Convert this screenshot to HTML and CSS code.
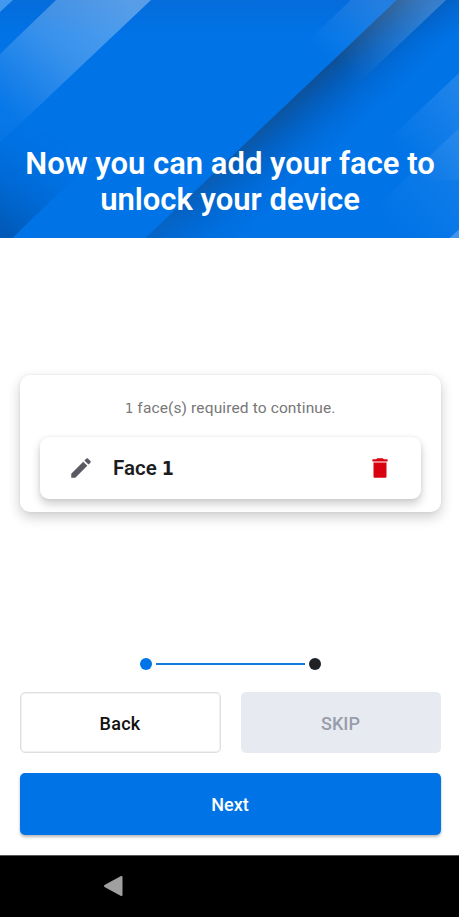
FILE: index.html
```html
<!DOCTYPE html>
<html lang="en">
<head>
<meta charset="utf-8">
<meta name="viewport" content="width=device-width">
<title>Face unlock setup</title>
<link rel="stylesheet" href="styles.css">
</head>
<body>
<div class="screen">
  <header class="hero">
    <svg class="hero-art" viewBox="0 0 459 238" preserveAspectRatio="none" aria-hidden="true">
      <defs>
        <linearGradient id="top" x1="0" y1="0" x2="0" y2="1"><stop offset="0" stop-color="#056cdb"/><stop offset=".15" stop-color="#0073e7"/><stop offset="1" stop-color="#0073e7"/></linearGradient>
        <linearGradient id="band" gradientUnits="userSpaceOnUse" x1="125" y1="0" x2="15" y2="119"><stop offset="0" stop-color="#fff" stop-opacity=".33"/><stop offset=".5" stop-color="#fff" stop-opacity=".22"/><stop offset="1" stop-color="#fff" stop-opacity=".03"/></linearGradient>
        <linearGradient id="corner" gradientUnits="userSpaceOnUse" x1="0" y1="238" x2="20" y2="125"><stop offset="0" stop-color="#003c80" stop-opacity=".48"/><stop offset="1" stop-color="#003c80" stop-opacity="0"/></linearGradient>
        <linearGradient id="cornerfade" gradientUnits="userSpaceOnUse" x1="0" y1="220" x2="85" y2="170"><stop offset="0" stop-color="#fff"/><stop offset="1" stop-color="#000"/></linearGradient>
        <mask id="cm" maskUnits="userSpaceOnUse" x="0" y="0" width="459" height="238"><rect width="459" height="238" fill="url(#cornerfade)"/></mask>
        <linearGradient id="shade" gradientUnits="userSpaceOnUse" x1="300" y1="91.6" x2="345" y2="139"><stop offset="0" stop-color="#173b66" stop-opacity=".7"/><stop offset=".3" stop-color="#093f7e" stop-opacity=".46"/><stop offset=".65" stop-color="#04448c" stop-opacity=".18"/><stop offset="1" stop-color="#04448c" stop-opacity="0"/></linearGradient>
        <linearGradient id="along" gradientUnits="userSpaceOnUse" x1="397" y1="0" x2="145" y2="238"><stop offset="0" stop-color="#fff"/><stop offset=".35" stop-color="#ddd"/><stop offset=".65" stop-color="#aaa"/><stop offset="1" stop-color="#555"/></linearGradient>
        <mask id="sm" maskUnits="userSpaceOnUse" x="0" y="0" width="459" height="238"><rect width="459" height="238" fill="url(#along)"/></mask>
        <linearGradient id="glow" gradientUnits="userSpaceOnUse" x1="375" y1="0" x2="318" y2="54"><stop offset="0" stop-color="#fff" stop-opacity=".12"/><stop offset="1" stop-color="#fff" stop-opacity="0"/></linearGradient>
        <linearGradient id="glow2" gradientUnits="userSpaceOnUse" x1="425" y1="0" x2="348" y2="73"><stop offset="0" stop-color="#fff" stop-opacity=".2"/><stop offset="1" stop-color="#fff" stop-opacity="0"/></linearGradient>
        <linearGradient id="glow3" gradientUnits="userSpaceOnUse" x1="459" y1="90" x2="395" y2="150"><stop offset="0" stop-color="#fff" stop-opacity=".12"/><stop offset="1" stop-color="#fff" stop-opacity="0"/></linearGradient>
        <linearGradient id="glow4" gradientUnits="userSpaceOnUse" x1="459" y1="145" x2="380" y2="219"><stop offset="0" stop-color="#fff" stop-opacity=".08"/><stop offset="1" stop-color="#fff" stop-opacity="0"/></linearGradient>
      </defs>
      <rect width="459" height="238" fill="url(#top)"/>
      <path d="M0 0H13L0 12Z" fill="#4298ed"/>
      <path d="M56 0H151L26 118 0 142V54Z" fill="url(#band)"/>
      <g mask="url(#cm)"><path d="M0 110H144L12 238H0Z" fill="url(#corner)"/></g>
      <path d="M351 0H397L320 73H311V38Z" fill="url(#glow)"/>
      <g mask="url(#sm)"><path d="M397 0H459V238H145Z" fill="url(#shade)"/></g>
      <path d="M397 0H446L355 86H306Z" fill="url(#glow2)"/>
      <path d="M459 73V180H390V138Z" fill="url(#glow3)"/>
      <path d="M459 128V238H342Z" fill="url(#glow4)"/>
      <path d="M459 229V238H449Z" fill="#4095ed"/>
    </svg>
    <h1 class="hero-title"><span class="line">Now you can add your face to</span><span class="line">unlock your device</span></h1>
  </header>
  <main class="content">
    <section class="card">
      <p class="hint"><span class="num">1</span> face(s) required to continue.</p>
      <div class="face">
        <svg class="pencil" viewBox="0 0 24 24" aria-hidden="true"><path fill="currentColor" d="M3 17.25V21h3.75L17.81 9.94l-3.75-3.75L3 17.25zM20.71 7.04a1 1 0 0 0 0-1.41l-2.34-2.34a1 1 0 0 0-1.41 0l-1.83 1.83 3.75 3.75 1.83-1.83z"/></svg>
        <span class="name">Face <span class="num">1</span></span>
        <svg class="trash" viewBox="0 0 24 24" aria-hidden="true"><path fill="currentColor" d="M6 19.500c0 .9.600 1.500 1.500 1.500h9c.9 0 1.500-.6 1.500-1.500V7H6v12.500zM19 4h-3.500l-1-1h-5l-1 1H5v2h14V4z"/></svg>
      </div>
    </section>
  </main>
  <footer class="footer">
    <div class="steps"><i class="dot"></i><i class="rail"></i><i class="dot dot-dark"></i></div>
    <div class="actions">
      <button class="btn back"><span>Back</span></button>
      <button class="btn skip"><span>SKIP</span></button>
      <button class="btn next"><span>Next</span></button>
    </div>
  </footer>
  <nav class="navbar"><svg class="nav-back" viewBox="0 0 20 22" aria-label="Back"><path d="M18.500 2V20L2 11Z" fill="#a0a0a0" stroke="#a0a0a0" stroke-width="2" stroke-linejoin="round"/></svg></nav>
</div>
</body>
</html>
```
FILE: styles.css
```css
* { box-sizing: border-box; }
body { margin: 0; background: #fff; font-family: Roboto, sans-serif; }
.screen { width: 459px; height: 917px; display: flex; flex-direction: column; overflow: hidden; }
.hero { position: relative; height: 238.4px; flex: none; padding: 146px 0 0 1px; }
.hero-art { position: absolute; inset: 0; width: 100%; height: 100%; }
.hero-title { position: relative; margin: 0; color: #fff; font-size: 31px; line-height: 36px; font-weight: 600; text-align: center; }
.line { display: block; white-space: nowrap; }
.content { flex: 1; padding: 136.6px 18.500px 0 19.500px; }
.card { height: 137px; padding: 22px 20px 0 20.500px; border-radius: 10px; background: #fff; overflow: hidden; box-shadow: 0 5px 13px rgba(0,0,0,.2), 0 0 3px rgba(0,0,0,.07); }
.hint { margin: 0 0 19px; height: 21px; line-height: 22px; text-align: center; color: #777; font-size: 15.500px; letter-spacing: .13px; white-space: nowrap; }
.num { font-family: "DejaVu Sans Condensed", "DejaVu Sans", sans-serif; font-size: .94em; }
.face { height: 62px; display: flex; align-items: center; padding: 1px 28px 0 28px; border-radius: 9px; background: #fff; box-shadow: 0 5px 10px rgba(0,0,0,.2), 0 0 4px rgba(0,0,0,.06); }
.pencil { width: 26px; height: 26px; color: #595a62; }
.name { flex: 1; margin: 1px 0 0 19px; color: #1d1d1f; font-size: 20.500px; line-height: 26px; font-weight: 600; }
.trash { width: 26px; height: 26px; color: #d9000f; }
.footer { height: 199px; flex: none; }
.steps { height: 15px; padding-left: 1px; display: flex; align-items: center; justify-content: center; gap: 4px; }
.dot { width: 12px; height: 12px; border-radius: 50%; background: #0073e6; }
.dot-dark { background: #202124; }
.rail { width: 149px; height: 2px; background: #1279df; }
.actions { display: grid; grid-template-columns: 201px 200px; column-gap: 20px; row-gap: 20px; padding: 21px 18.500px 0 19.500px; }
.btn { height: 61px; padding: 2px 0 0; border: 0; border-radius: 5px; font: 500 18px/24px Roboto, sans-serif; }
.back { color: #111; background: #fff; border: 1px solid #dfdfdf; box-shadow: inset 0 0 0 1px #f1f1f1; letter-spacing: .3px; }
.skip { color: #989dac; background: #e7eaf0; }
.next { grid-column: span 2; height: 62px; background: #0073e6; color: #fff; box-shadow: 0 2px 3px rgba(0,0,0,.28); }
.navbar { height: 62px; flex: none; padding: 19px 0 0 103px; background: #000; border-top: 1px solid #555; }
.nav-back { display: block; width: 20px; height: 22px; }
```
